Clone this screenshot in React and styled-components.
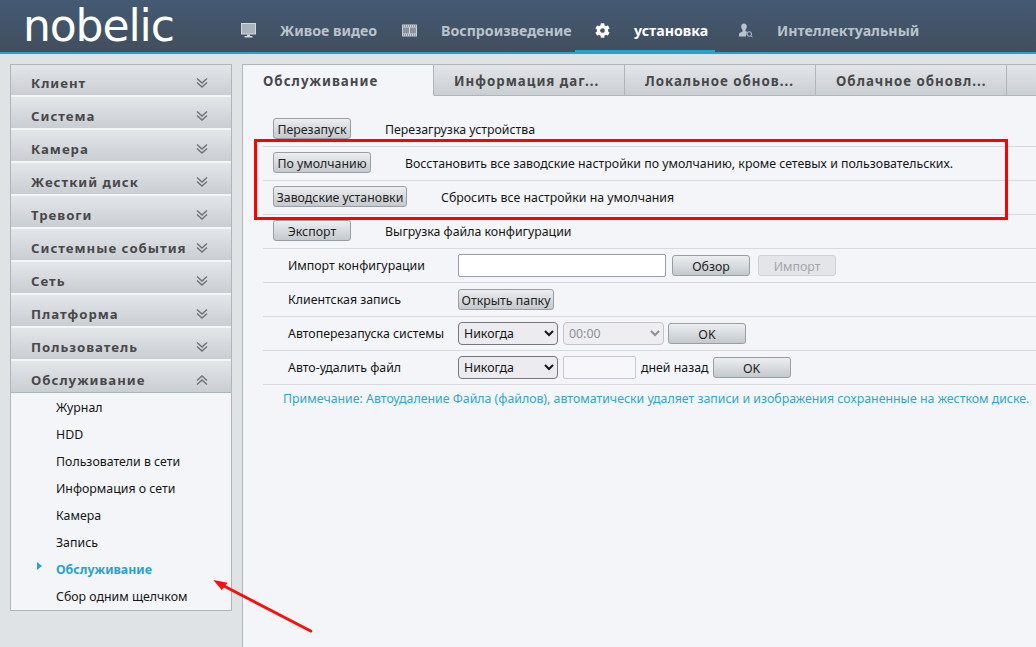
import React from "react";
import styled, { createGlobalStyle } from "styled-components";
import { FaCog } from "react-icons/fa";

const GlobalStyle = createGlobalStyle`
  html, body {
    margin: 0;
    padding: 0;
    height: 100%;
    overflow: hidden;
    background: #dfe3e6;
    font-family: "Noto Sans", "Open Sans", sans-serif;
  }
`;

const Page = styled.div`
  position: relative;
  width: 1036px;
  height: 647px;
  overflow: hidden;
  display: flex;
  flex-direction: column;
`;

const Header = styled.header`
  height: 52px;
  display: flex;
  align-items: stretch;
  background: linear-gradient(#445a73, #414e5e);
  border-bottom: 2px solid #26a3c9;
  flex: none;
`;

const Logo = styled.div`
  width: 221px;
  box-sizing: border-box;
  padding-left: 23px;
  color: #fff;
  font-family: "DejaVu Sans", sans-serif;
  font-size: 44px;
  line-height: 52px;
  letter-spacing: -1.1px;
  white-space: nowrap;
`;

const NavItem = styled.div`
  width: ${(p) => p.$w}px;
  margin-right: ${(p) => p.$mr || 0}px;
  height: 53px;
  box-sizing: border-box;
  padding: 11px 0 0 20px;
  display: flex;
  align-items: center;
  gap: 24px;
  font-size: 14.2px;
  font-weight: 700;
  white-space: nowrap;
  color: ${(p) => (p.$active ? "#fff" : "#b9c3cc")};
  border-bottom: 3px solid ${(p) => (p.$active ? "#26a3c9" : "transparent")};
  svg {
    flex: none;
    width: 15px;
    height: 15px;
  }
`;

const Body = styled.div`
  flex: 1;
  display: flex;
  gap: 10px;
  padding: 10px 0 0 10px;
  min-height: 0;
`;

const Sidebar = styled.aside`
  width: 222px;
  flex: none;
  align-self: flex-start;
  box-sizing: border-box;
  border: 1px solid #b0b5b9;
  background: #f3f5f8;
`;

const GroupHead = styled.div`
  height: 31px;
  box-sizing: border-box;
  display: flex;
  align-items: center;
  justify-content: space-between;
  padding: 6px 23px 0 20px;
  font-size: 13.2px;
  font-weight: 700;
  letter-spacing: 1px;
  color: #48484a;
  background: linear-gradient(#e3e6e9, #c9ced3);
  border-bottom: 1px solid #b0b5b9;
  & + & {
    box-shadow: 0 -1px 0 #f3f5f8;
    border-top: 1px solid #f3f5f8;
    height: 33px;
  }
  svg {
    width: 12px;
    height: 12px;
    color: #6d7276;
  }
`;

const MenuList = styled.div`
  padding: 1px 0 0;
`;

const MenuItem = styled.div`
  position: relative;
  height: 27px;
  line-height: 27px;
  padding-left: 45px;
  font-size: 12.35px;
  white-space: nowrap;
  font-weight: ${(p) => (p.$active ? 700 : 400)};
  color: ${(p) => (p.$active ? "#26a3c9" : "#151515")};
`;

const Marker = styled.span`
  position: absolute;
  left: 26px;
  top: 6px;
  width: 0;
  height: 0;
  border-left: 5px solid #26a3c9;
  border-top: 4px solid transparent;
  border-bottom: 4px solid transparent;
`;

const Main = styled.main`
  flex: 1;
  min-width: 0;
  background: #f3f5f8;
  border-left: 1px solid #b0b5b9;
  border-top: 1px solid #b0b5b9;
`;

const Tabs = styled.div`
  display: flex;
  height: 31px;
`;

const Tab = styled.div`
  width: ${(p) => p.$w}px;
  flex: none;
  box-sizing: border-box;
  padding: 2px 0 0 20px;
  display: flex;
  align-items: center;
  font-size: 13.3px;
  font-weight: 700;
  letter-spacing: 1px;
  white-space: nowrap;
  color: #48484a;
  border-right: 1px solid #b0b5b9;
  background: ${(p) =>
    p.$active ? "#f3f5f8" : "linear-gradient(#e3e6e9, #c9ced3)"};
  border-bottom: 1px solid ${(p) => (p.$active ? "#f3f5f8" : "#b0b5b9")};
`;

const Content = styled.div`
  padding: 17px 0 0 20px;
`;

const Row = styled.div`
  height: 34px;
  box-sizing: border-box;
  display: flex;
  align-items: center;
  padding-left: 10px;
  border-bottom: 1px solid #d7d9dd;
  font-size: 12.35px;
  color: #151515;
  white-space: nowrap;
`;

const Button = styled.button`
  width: ${(p) => p.$w}px;
  height: 21px;
  flex: none;
  box-sizing: border-box;
  margin: 0 ${(p) => p.$mr || 0}px 0 ${(p) => p.$ml || 0}px;
  padding: 1px 0 0;
  font: inherit;
  color: ${(p) => (p.disabled ? "#a3a6a9" : "#222")};
  background: ${(p) =>
    p.disabled ? "#e3e5e8" : "linear-gradient(#eceef0, #c4c9ce)"};
  border: 1px solid ${(p) => (p.disabled ? "#d0d2d5" : "#999ea4")};
  border-radius: 3px;
`;

const ActionButton = styled(Button)`
  margin-top: -2px;
`;

const Description = styled.span`
  margin-left: 34px;
`;

const Label = styled.span`
  width: 170px;
  flex: none;
  padding-left: 15px;
`;

const TextInput = styled.input`
  width: ${(p) => p.$w}px;
  height: 23px;
  flex: none;
  box-sizing: border-box;
  margin-right: ${(p) => p.$mr || 0}px;
  padding: 0 4px;
  background: ${(p) => p.$bg || "#fff"};
  border: 1px solid ${(p) => p.$line || "#9c9ca6"};
  border-radius: 2px;
`;

const Select = styled.select`
  width: ${(p) => p.$w}px;
  height: 23px;
  flex: none;
  box-sizing: border-box;
  margin-right: ${(p) => p.$mr || 0}px;
  padding: 0 0 0 1px;
  font: inherit;
  color: ${(p) => (p.disabled ? "#8d8f92" : "#151515")};
  background-color: ${(p) => (p.disabled ? "#eeeef0" : "#ecebef")};
  border: 1px solid ${(p) => (p.disabled ? "#c4c4c8" : "#77777c")};
  border-radius: 4px;
  opacity: 1;
`;

const Note = styled.div`
  padding: 5px 0 0 20px;
  font-size: 12.35px;
  white-space: nowrap;
  color: #33a6ca;
`;

const Highlight = styled.div`
  position: absolute;
  left: 254px;
  top: 139px;
  width: 754px;
  height: 81px;
  box-sizing: border-box;
  border: 3px solid #ff0000;
  pointer-events: none;
`;

const Arrow = styled.svg`
  position: absolute;
  left: 205px;
  top: 570px;
  width: 115px;
  height: 70px;
  pointer-events: none;
`;

const Chevrons = ({ up }) => (
  <svg viewBox="0 0 12 12" fill="none" stroke="currentColor" strokeWidth="1.4">
    <g transform={up ? "rotate(180 6 6)" : undefined}>
      <path d="M1 1.5 L6 6 L11 1.5" />
      <path d="M1 5.5 L6 10 L11 5.5" />
    </g>
  </svg>
);

const MonitorIcon = () => (
  <svg viewBox="0 0 15 15" fill="currentColor">
    <rect x="0.5" y="0.5" width="14" height="10.500" fill="#a9b3bc" stroke="#d3d8dc" />
    <path d="M6 11.500h3v1.500H6zM3.500 13h8v1.500h-8z" fill="#d3d8dc" />
  </svg>
);

const FilmIcon = () => (
  <svg viewBox="0 0 15 15">
    <rect x="0" y="1.500" width="15" height="12" fill="#c9ced3" />
    <path
      d="M1 2.500h1v1H1zM3 2.500h1v1H3zM5 2.500h1v1H5zM7 2.500h1v1H7zM9 2.500h1v1H9zM11 2.500h1v1h-1zM13 2.500h1v1h-1zM1 11.500h1v1H1zM3 11.500h1v1H3zM5 11.500h1v1H5zM7 11.500h1v1H7zM9 11.500h1v1H9zM11 11.500h1v1h-1zM13 11.500h1v1h-1z"
      fill="#5d6b7a"
    />
    <path d="M1 4.500h6v6H1zM8 4.500h6v6H8z" fill="#8b949c" />
  </svg>
);

const PersonIcon = () => (
  <svg viewBox="0 0 15 15" fill="currentColor">
    <path d="M6 0.500C7.900 0.500 8.900 1.900 8.800 3.700 8.700 5.100 8.200 6.100 7.500 6.800V8L9 8.800 7.800 13.500H1V11.500C1 10.500 1.500 10 2.500 9.600L4.500 8.500V6.800C3.800 6.100 3.300 5.100 3.200 3.700 3.100 1.900 4.100 0.500 6 0.500Z" />
    <circle cx="11.300" cy="11" r="2.300" fill="none" stroke="currentColor" strokeWidth="1" />
    <path d="M13 12.800l1.500 1.500" stroke="currentColor" strokeWidth="1" />
  </svg>
);

const groups = [
  "Клиент",
  "Система",
  "Камера",
  "Жесткий диск",
  "Тревоги",
  "Системные события",
  "Сеть",
  "Платформа",
  "Пользователь",
];

const menu = [
  "Журнал",
  "HDD",
  "Пользователи в сети",
  "Информация о сети",
  "Камера",
  "Запись",
  "Обслуживание",
  "Сбор одним щелчком",
];

const App = () => {
  return (
    <Page>
      <GlobalStyle />
      <Header>
        <Logo>nobelic</Logo>
        <NavItem $w={161}>
          <MonitorIcon />
          Живое видео
        </NavItem>
        <NavItem $w={193}>
          <FilmIcon />
          Воспроизведение
        </NavItem>
        <NavItem $w={140} $mr={3} $active>
          <FaCog />
          установка
        </NavItem>
        <NavItem $w={220}>
          <PersonIcon />
          Интеллектуальный
        </NavItem>
      </Header>

      <Body>
        <Sidebar>
          {groups.map((g) => (
            <GroupHead key={g}>
              {g}
              <Chevrons />
            </GroupHead>
          ))}
          <GroupHead>
            Обслуживание
            <Chevrons up />
          </GroupHead>
          <MenuList>
            {menu.map((m, i) => (
              <MenuItem key={m} $active={i === 6}>
                {i === 6 && <Marker />}
                {m}
              </MenuItem>
            ))}
          </MenuList>
        </Sidebar>

        <Main>
          <Tabs>
            <Tab $w={191} $active>
              Обслуживание
            </Tab>
            <Tab $w={191}>Информация даг...</Tab>
            <Tab $w={191}>Локальное обнов...</Tab>
            <Tab $w={191}>Облачное обновл...</Tab>
            <Tab $w={30} />
          </Tabs>
          <Content>
            <Row>
              <ActionButton $w={78}>Перезапуск</ActionButton>
              <Description>Перезагрузка устройства</Description>
            </Row>
            <Row>
              <ActionButton $w={98}>По умолчанию</ActionButton>
              <Description>
                Восстановить все заводские настройки по умолчанию, кроме сетевых
                и пользовательских.
              </Description>
            </Row>
            <Row>
              <ActionButton $w={134}>Заводские установки</ActionButton>
              <Description>Сбросить все настройки на умолчания</Description>
            </Row>
            <Row>
              <ActionButton $w={78}>Экспорт</ActionButton>
              <Description>Выгрузка файла конфигурации</Description>
            </Row>
            <Row>
              <Label>Импорт конфигурации</Label>
              <TextInput $w={208} $mr={6} />
              <Button $w={78} $mr={8}>
                Обзор
              </Button>
              <Button $w={78} disabled>
                Импорт
              </Button>
            </Row>
            <Row>
              <Label>Клиентская запись</Label>
              <Button $w={96}>Открыть папку</Button>
            </Row>
            <Row>
              <Label>Автоперезапуска системы</Label>
              <Select $w={100} $mr={5}>
                <option>Никогда</option>
              </Select>
              <Select $w={101} $mr={4} disabled>
                <option>00:00</option>
              </Select>
              <Button $w={78}>OK</Button>
            </Row>
            <Row>
              <Label>Авто-удалить файл</Label>
              <Select $w={100} $mr={5}>
                <option>Никогда</option>
              </Select>
              <TextInput $w={73} $mr={5} $bg="#f7f7f9" $line="#c9c9cd" />
              дней назад
              <Button $w={78} $ml={4}>
                OK
              </Button>
            </Row>
            <Note>
              Примечание: Автоудаление Файла (файлов), автоматически удаляет
              записи и изображения сохраненные на жестком диске.
            </Note>
          </Content>
        </Main>
      </Body>

      <Highlight />
      <Arrow viewBox="0 0 115 70">
        <path d="M105.700 61 L19 16" stroke="#ff0d0d" strokeWidth="3" strokeLinecap="round" />
        <path d="M8.300 10 L22.700 12.700 L16.700 20 Z" fill="#ff0d0d" />
      </Arrow>
    </Page>
  );
};

export default App;
